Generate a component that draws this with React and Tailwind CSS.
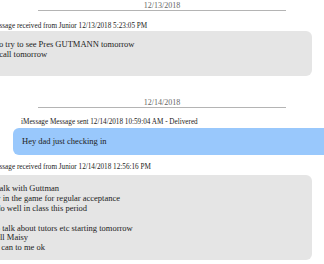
import React from 'react';

const DateDivider = ({ date, className = '' }) => (
  <div className={className}>
    <div className="text-center text-[8px] leading-[9px] text-[#666]">{date}</div>
    <div className="mx-[38px] h-px bg-[#b4b4b4]" />
  </div>
);

const Header = ({ children }) => (
  <div className="pl-[8px] text-[7.2px] leading-[10px] text-[#222] whitespace-nowrap">{children}</div>
);

const App = () => {
  const first = [
    "I'm going to try to see Pres GUTMANN tomorrow",
    'Will try to call tomorrow',
    ''
  ];

  const second = [
    'Had a big talk with Guttman',
    "He's totally in the game for regular acceptance",
    'He has to do well in class this period',
    '',
    'We need to talk about tutors etc starting tomorrow',
    'Love ya, tell Maisy',
    'Text if you can to me ok'
  ];

  return (
    <div className="w-[324px] h-[264px] overflow-hidden bg-white font-['Liberation_Serif',serif]">
      <DateDivider date="12/13/2018" className="pt-[1px]" />

      {/* received */}
      <div className="-ml-[47px] mr-[12px] mt-[10px]">
        <Header>iMessage Message received from Junior 12/13/2018 5:23:05 PM</Header>
        <div className="rounded-md bg-[#e5e5e5] px-[9px] pt-[9px] pb-[7px] text-[8.5px] leading-[9.8px] text-[#222] whitespace-nowrap">
          {first.map((line, i) => (
            <div key={i} className="h-[9.8px]">{line}</div>
          ))}
        </div>
      </div>

      <DateDivider date="12/14/2018" className="mt-[22px]" />

      {/* sent */}
      <div className="ml-[13px] -mr-[30px] mt-[9px]">
        <Header>iMessage Message sent 12/14/2018 10:59:04 AM - Delivered</Header>
        <div className="mt-[1px] rounded-md bg-[#99c8fc] px-[9px] pt-[8px] pb-[9px] text-[8.5px] leading-[10px] text-[#222] whitespace-nowrap">
          Hey dad just checking in
        </div>
      </div>

      {/* received */}
      <div className="-ml-[47px] mr-[12px] mt-[7px]">
        <Header>iMessage Message received from Junior 12/14/2018 12:56:16 PM</Header>
        <div className="mt-[3px] rounded-md bg-[#e5e5e5] px-[9px] pt-[9px] pb-[7px] text-[8.5px] leading-[9.8px] text-[#222] whitespace-nowrap">
          {second.map((line, i) => (
            <div key={i} className="h-[9.8px]">{line}</div>
          ))}
        </div>
      </div>
    </div>
  );
};

export default App;
